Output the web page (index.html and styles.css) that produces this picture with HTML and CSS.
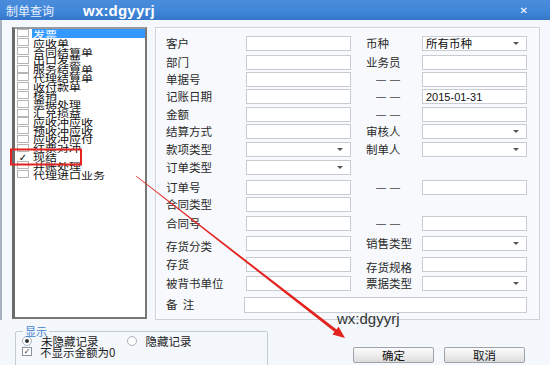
FILE: index.html
```html
<!DOCTYPE html>
<html>
<head>
<meta charset="utf-8">
<link rel="stylesheet" href="styles.css">
</head>
<body>
<div class="window">
  <div class="titlebar">
    <span class="title">制单查询</span>
    <span class="title-mark">wx:dgyyrj</span>
    <span class="close">✕</span>
  </div>
  <div class="main">
    <div class="list">
      <div class="item"><span class="cb"></span><span class="txt sel"><span class="t">发票</span></span></div>
      <div class="item"><span class="cb"></span><span class="txt"><span class="t">应收单</span></span></div>
      <div class="item"><span class="cb"></span><span class="txt"><span class="t">合同结算单</span></span></div>
      <div class="item"><span class="cb"></span><span class="txt"><span class="t">出口发票</span></span></div>
      <div class="item"><span class="cb"></span><span class="txt"><span class="t">服务结算单</span></span></div>
      <div class="item"><span class="cb"></span><span class="txt"><span class="t">代理结算单</span></span></div>
      <div class="item"><span class="cb"></span><span class="txt"><span class="t">收付款单</span></span></div>
      <div class="item"><span class="cb"></span><span class="txt"><span class="t">核销</span></span></div>
      <div class="item"><span class="cb"></span><span class="txt"><span class="t">票据处理</span></span></div>
      <div class="item"><span class="cb"></span><span class="txt"><span class="t">汇兑损益</span></span></div>
      <div class="item"><span class="cb"></span><span class="txt"><span class="t">应收冲应收</span></span></div>
      <div class="item"><span class="cb"></span><span class="txt"><span class="t">预收冲应收</span></span></div>
      <div class="item"><span class="cb"></span><span class="txt"><span class="t">应收冲应付</span></span></div>
      <div class="item"><span class="cb"></span><span class="txt"><span class="t">红票对冲</span></span></div>
      <div class="item"><span class="cb checked">✓</span><span class="txt"><span class="t">现结</span></span></div>
      <div class="item"><span class="cb"></span><span class="txt"><span class="t">并账处理</span></span></div>
      <div class="item"><span class="cb"></span><span class="txt"><span class="t">代理进口业务</span></span></div>
    </div>
    <div class="form">
      <div class="lbl">客户</div><div class="inp"></div><div class="lbl2">币种</div><div class="inp sel-box"><span class="val">所有币种</span><span class="caret"></span></div>
      <div class="lbl">部门</div><div class="inp"></div><div class="lbl2">业务员</div><div class="inp"></div>
      <div class="lbl">单据号</div><div class="inp"></div><div class="lbl2 dash"><span>—</span><span>—</span></div><div class="inp"></div>
      <div class="lbl">记账日期</div><div class="inp"></div><div class="lbl2 dash"><span>—</span><span>—</span></div><div class="inp"><span class="date">2015-01-31</span></div>
      <div class="lbl">金额</div><div class="inp"></div><div class="lbl2 dash"><span>—</span><span>—</span></div><div class="inp"></div>
      <div class="lbl">结算方式</div><div class="inp"></div><div class="lbl2">审核人</div><div class="inp sel-box"><span class="val"></span><span class="caret"></span></div>
      <div class="lbl">款项类型</div><div class="inp sel-box"><span class="val"></span><span class="caret"></span></div><div class="lbl2">制单人</div><div class="inp sel-box"><span class="val"></span><span class="caret"></span></div>
      <div class="lbl">订单类型</div><div class="inp sel-box"><span class="val"></span><span class="caret"></span></div><div></div><div></div>
      <div class="lbl">订单号</div><div class="inp"></div><div class="lbl2 dash"><span>—</span><span>—</span></div><div class="inp"></div>
      <div class="lbl">合同类型</div><div class="inp"></div><div></div><div></div>
      <div class="lbl">合同号</div><div class="inp"></div><div class="lbl2 dash"><span>—</span><span>—</span></div><div class="inp"></div>
      <div class="lbl low">存货分类</div><div class="inp"></div><div class="lbl2">销售类型</div><div class="inp sel-box"><span class="val"></span><span class="caret"></span></div>
      <div class="lbl">存货</div><div class="inp"></div><div class="lbl2 low">存货规格</div><div class="inp"></div>
      <div class="lbl">被背书单位</div><div class="inp"></div><div class="lbl2">票据类型</div><div class="inp sel-box"><span class="val"></span><span class="caret"></span></div>
      <div class="lbl">备&nbsp;&nbsp;注</div><div class="inp wide"></div>
    </div>
  </div>
  <div class="bottom">
    <div class="display">
      <div class="legend">显示</div>
      <div class="opt-row">
        <span class="opt"><span class="radio on"></span>未隐藏记录</span>
        <span class="opt opt2"><span class="radio"></span>隐藏记录</span>
      </div>
      <div class="opt-row">
        <span class="opt"><span class="chk">✓</span>不显示金额为0</span>
      </div>
    </div>
    <div class="actions">
      <button class="btn">确定</button>
      <button class="btn">取消</button>
    </div>
  </div>
  <div class="watermark">wx:dgyyrj</div>
  <svg class="annot" width="550" height="365" viewBox="0 0 550 365">
    <rect x="11" y="149.5" width="70" height="15" fill="none" stroke="#e3231f" stroke-width="2"/>
    <polygon points="135.8,176.3 136.2,175.7 336.9,329.8 335.1,332.2" fill="#e3231f"/>
    <polygon points="345,338 332.4,334.6 338.6,326.7" fill="#e3231f"/>
  </svg>
</div>
</body>
</html>
```

FILE: styles.css
```css
* { box-sizing: border-box; }
html, body {
  margin: 0;
  padding: 0;
  width: 550px;
  height: 365px;
  overflow: hidden;
}
body {
  font-family: "Noto Sans CJK SC", "Liberation Sans", sans-serif;
  font-size: 11.5px;
  color: #222;
  background: #f4f7fb;
}
.window {
  position: relative;
  width: 550px;
  height: 365px;
  background: #f4f7fb;
}
.titlebar {
  height: 20px;
  display: flex;
  align-items: center;
  background: linear-gradient(180deg, #4a8ddc 0%, #3f86d8 60%, #3576c9 100%);
  color: #fff;
}
.title {
  font-size: 12px;
  padding-left: 6px;
  color: #e6efff;
}
.title-mark {
  font-family: "Liberation Sans", sans-serif;
  font-weight: bold;
  font-size: 15px;
  margin-left: 29px;
  letter-spacing: 0.2px;
}
.close {
  margin-left: auto;
  margin-right: 22px;
  font-size: 10px;
  font-weight: bold;
  font-family: "DejaVu Sans", sans-serif;
}
.main {
  display: flex;
  height: 300px;
  padding: 7px 0 0 12px;
  border-left: 2px solid #a8b2be;
  gap: 8px;
}
.list {
  width: 135px;
  height: 292px;
  margin-left: -2px;
  background: #fff;
  border: 2px solid #777;
  border-top-color: #9a9a9a;
  border-left: 3px solid #6a6a6a;
}
.item {
  display: flex;
  align-items: center;
  height: 8.8px;
  font-size: 12px;
  color: #111;
  white-space: nowrap;
}
.cb {
  width: 12px;
  height: 8px;
  margin-left: 2px;
  border: 1px solid #b5b5b5;
  background: #fff;
  font-size: 10px;
  line-height: 7px;
  text-align: center;
  color: #000;
  font-family: "DejaVu Sans", sans-serif;
  flex: none;
}
.cb.checked {
  border-color: #fff;
  font-weight: bold;
}
.txt {
  margin-left: 3px;
  flex: 1;
  padding-left: 1px;
  height: 9px;
  line-height: 9px;
  display: flex;
  align-items: center;
}
.txt .t {
  display: inline-block;
  transform: scaleY(0.8);
  transform-origin: center;
}
.txt.sel {
  background: #3399ff;
  color: #fff;
}
.form {
  width: 385px;
  height: 293px;
  border: 1px solid #cdd3db;
  box-shadow: inset 1px 1px 0 #fff;
  background: #f7f9fc;
  padding: 8px 0 0 10px;
  display: grid;
  grid-template-columns: 80px 105px 71px 105px;
  grid-template-rows: 19px 17px 17px 18px 17px 18px 18px 20px 17px 19px 20px 21px 19px 21px 16px;
}
.lbl, .lbl2 {
  line-height: 15px;
  font-size: 11.5px;
  color: #2a2a2a;
  white-space: nowrap;
}
.lbl2 { padding-left: 15px; }
.lbl2.dash {
  padding-left: 25px;
  display: flex;
  gap: 4px;
  font-family: "Liberation Sans", sans-serif;
  font-size: 10px;
  color: #444;
}
.low { padding-top: 3px; }
.inp {
  height: 15px;
  background: #fff;
  border: 1px solid #c7ccd3;
  display: flex;
  align-items: center;
}
.inp.wide {
  grid-column: 2 / 5;
  margin-left: -2px;
  height: 16px;
}
.sel-box {
  justify-content: space-between;
  padding: 0 7px 0 3px;
}
.val {
  font-size: 11.5px;
  line-height: 13px;
  color: #111;
}
.caret {
  width: 0;
  height: 0;
  border-top: 3px solid #555;
  border-left: 3px solid transparent;
  border-right: 3px solid transparent;
}
.date {
  font-family: "Liberation Sans", sans-serif;
  font-size: 11px;
  padding-left: 3px;
  color: #111;
}
.bottom {
  display: flex;
  height: 45px;
}
.display {
  position: relative;
  margin: 11px 0 0 15px;
  width: 253px;
  height: 40px;
  border: 1px solid #c3cbd5;
  border-radius: 2px;
  padding: 3px 0 0 6px;
}
.legend {
  position: absolute;
  left: 7px;
  top: -6px;
  padding: 0 2px;
  background: #f4f7fb;
  color: #3f7fd6;
  font-size: 11px;
  line-height: 10px;
}
.opt-row {
  display: flex;
  align-items: center;
  height: 11px;
  font-size: 11.5px;
}
.opt {
  display: flex;
  align-items: center;
  color: #222;
}
.opt2 { margin-left: 28px; }
.radio {
  width: 10px;
  height: 10px;
  border-radius: 50%;
  border: 1px solid #a8b0ba;
  background: #fff;
  margin-right: 9px;
  display: flex;
  align-items: center;
  justify-content: center;
}
.radio.on::before {
  content: "";
  width: 4px;
  height: 4px;
  border-radius: 50%;
  background: #333;
}
.chk {
  width: 10px;
  height: 9px;
  border: 1px solid #8a9099;
  background: #fff;
  margin-right: 8px;
  font-size: 8px;
  line-height: 7px;
  text-align: center;
  font-family: "DejaVu Sans", sans-serif;
  color: #333;
}
.actions {
  display: flex;
  gap: 10px;
  margin: 27px 0 0 85px;
}
.btn {
  width: 81px;
  height: 16px;
  padding: 0;
  border: 1px solid #9ea3a9;
  border-radius: 2px;
  background: linear-gradient(180deg, #fbfbfb 0%, #ececec 55%, #dcdcdc 100%);
  font-family: "Noto Sans CJK SC", sans-serif;
  font-size: 11.5px;
  line-height: 14px;
  color: #111;
}
.watermark {
  position: absolute;
  left: 337px;
  top: 310px;
  font-family: "Liberation Sans", sans-serif;
  font-size: 15px;
  color: #333;
}
.annot {
  position: absolute;
  left: 0;
  top: 0;
  pointer-events: none;
}
```
